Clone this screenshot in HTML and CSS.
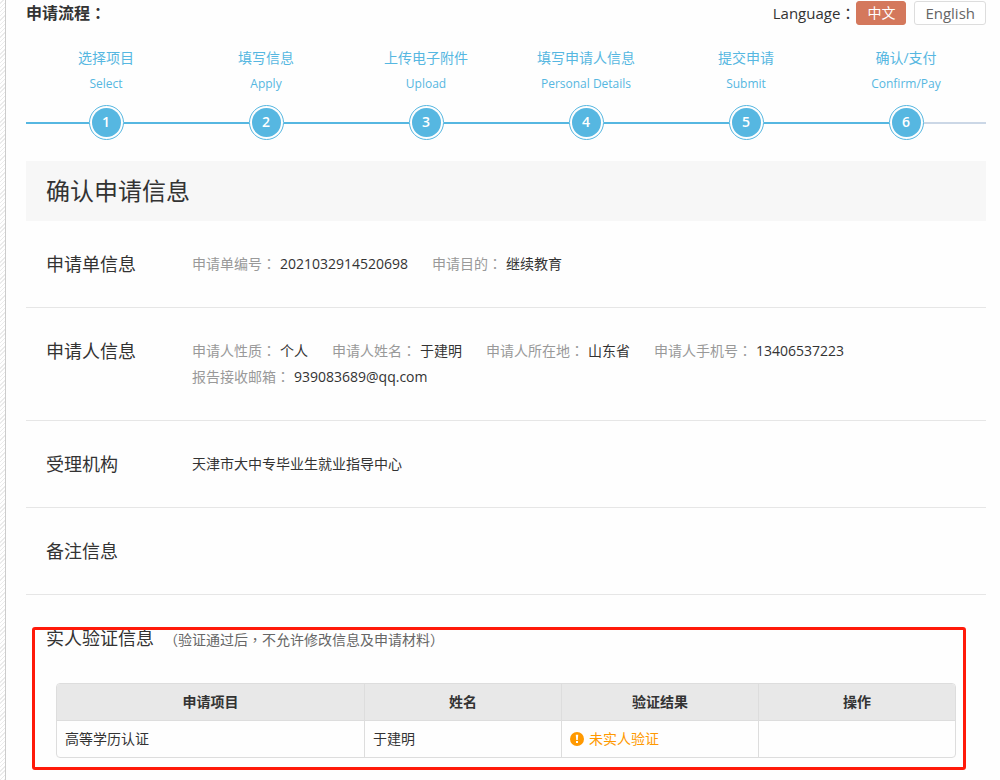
FILE: index.html
```
<!DOCTYPE html>
<html lang="zh-CN">
<head>
    <meta charset="utf-8">
    <title>确认申请信息</title>
    <link rel="stylesheet" href="styles.css">
</head>
<body>
<div class="main">
    <div class="top">
        <h2 class="top_title">申请流程<span class="mid" lang="zh-TW">：</span></h2>
        <div class="lang">
            <span class="lang_label">Language<span class="mid" lang="zh-TW">：</span></span>
            <button type="button" class="btn on">中文</button>
            <button type="button" class="btn en">English</button>
        </div>
    </div>

    <ol class="steps">
        <li><span class="cn">选择项目</span><span class="en">Select</span><div class="line"><i>1</i></div></li>
        <li><span class="cn">填写信息</span><span class="en">Apply</span><div class="line"><i>2</i></div></li>
        <li><span class="cn">上传电子附件</span><span class="en">Upload</span><div class="line"><i>3</i></div></li>
        <li><span class="cn">填写申请人信息</span><span class="en">Personal Details</span><div class="line"><i>4</i></div></li>
        <li><span class="cn">提交申请</span><span class="en">Submit</span><div class="line"><i>5</i></div></li>
        <li><span class="cn">确认/支付</span><span class="en">Confirm/Pay</span><div class="line"><i>6</i></div></li>
    </ol>

    <h1 class="title">确认申请信息</h1>

    <div class="row">
        <h3>申请单信息</h3>
        <dl class="info">
            <div><dt>申请单编号<span class="mid" lang="zh-TW">：</span></dt><dd>2021032914520698</dd></div>
            <div><dt>申请目的<span class="mid" lang="zh-TW">：</span></dt><dd>继续教育</dd></div>
        </dl>
    </div>
    <div class="row">
        <h3>申请人信息</h3>
        <dl class="info">
            <div><dt>申请人性质<span class="mid" lang="zh-TW">：</span></dt><dd>个人</dd></div>
            <div><dt>申请人姓名<span class="mid" lang="zh-TW">：</span></dt><dd>于建明</dd></div>
            <div><dt>申请人所在地<span class="mid" lang="zh-TW">：</span></dt><dd>山东省</dd></div>
            <div><dt>申请人手机号<span class="mid" lang="zh-TW">：</span></dt><dd>13406537223</dd></div>
            <div><dt>报告接收邮箱<span class="mid" lang="zh-TW">：</span></dt><dd>939083689@qq.com</dd></div>
        </dl>
    </div>
    <div class="row">
        <h3>受理机构</h3>
        <p class="info">天津市大中专毕业生就业指导中心</p>
    </div>
    <div class="row">
        <h3>备注信息</h3>
    </div>

    <div class="verify">
        <div class="verify_title">
            <h3>实人验证信息</h3>
            <p><span class="mid" lang="zh-TW">（</span>验证通过后<span class="mid" lang="zh-TW">，</span>不允许修改信息及申请材料<span class="mid" lang="zh-TW">）</span></p>
        </div>
        <table class="table">
            <thead>
            <tr>
                <th class="item">申请项目</th>
                <th>姓名</th>
                <th>验证结果</th>
                <th>操作</th>
            </tr>
            </thead>
            <tbody>
            <tr>
                <td>高等学历认证</td>
                <td>于建明</td>
                <td>
                    <div class="warn">
                        <svg width="14" height="14" viewBox="0 0 14 14">
                            <circle cx="7" cy="7" r="7" fill="#ff9900"/>
                            <path d="M5.8 2.8h2.4l-.4 5.2H6.2z" fill="#fff"/>
                            <rect x="6" y="9" width="2" height="2" fill="#fff"/>
                        </svg>
                        <span>未实人验证</span>
                    </div>
                </td>
                <td></td>
            </tr>
            </tbody>
        </table>
        <!-- 红框 -->
        <div class="mark"></div>
    </div>
</div>
</body>
</html>
```
FILE: styles.css
```
*{
    padding: 0;
    margin: 0;
    box-sizing: border-box;
}
body{
    padding-left: 5px;
    background: repeating-linear-gradient(135deg, #fff 0, #fff 2px, #ebebeb 2px, #ebebeb 3px);
    font-family: "Open Sans", "Noto Sans CJK SC", sans-serif;
    font-size: 14px;
    line-height: 26px;
    color: #333;
}
h1,h2,h3{
    font-weight: normal;
}
/* 标点居中 */
.mid{
    font-family: "Noto Sans CJK TC", sans-serif;
    line-height: 1;
}
.main{
    min-height: 100vh;
    padding: 0 14px 0 20px;
    border-left: 1px solid #ccc;
    background-color: #fefefe;
}
.top{
    display: flex;
    justify-content: space-between;
    align-items: center;
}
.top_title{
    font-size: 16px;
    font-weight: bold;
}
.lang{
    display: flex;
    align-items: center;
    gap: 8px;
}
.lang_label{
    margin-right: -7px;
    font-size: 15px;
}
.btn{
    height: 24px;
    padding: 0 10px;
    border: 1px solid #ddd;
    border-radius: 3px;
    background-color: #fff;
    font-family: inherit;
    font-size: 14px;
    line-height: 20px;
    color: #666;
    cursor: pointer;
}
.btn.en{
    font-size: 15px;
}
.btn.on{
    border-color: #d4785c;
    background-color: #d4785c;
    color: #fff;
}
.steps{
    display: flex;
    margin-top: 19px;
    list-style: none;
    text-align: center;
    color: #56b7e1;
}
.steps li{
    flex: 1;
}
.steps span{
    display: block;
}
.steps .en{
    font-size: 12px;
}
/* 进度线 */
.line{
    display: flex;
    justify-content: center;
    align-items: center;
    margin-top: 8px;
}
.line:before,
.line:after{
    content: "";
    flex: 1;
    height: 2px;
    background-color: #56b7e1;
}
.steps li:last-child .line:after{
    background-color: #cbd7e6;
}
.line i{
    width: 35px;
    height: 35px;
    padding: 2px;
    border: 1px solid #56b7e1;
    border-radius: 50%;
    background-color: #56b7e1;
    background-clip: content-box;
    font-style: normal;
    font-weight: 600;
    line-height: 28px;
    color: #fff;
}
.title{
    margin-top: 21px;
    padding: 0 20px;
    background-color: #f7f7f7;
    font-size: 24px;
    line-height: 60px;
}
.row{
    display: flex;
    padding: 30px 20px;
    border-bottom: 1px solid #e6e6e6;
}
.row h3{
    flex: none;
    width: 146px;
    font-size: 18px;
}
.info{
    display: flex;
    flex-wrap: wrap;
    flex: 1;
    column-gap: 24px;
}
.info div{
    display: flex;
    gap: 4px;
}
.info dt{
    color: #999;
}
.verify{
    position: relative;
    padding: 30px;
}
.verify_title{
    display: flex;
    align-items: baseline;
    gap: 10px;
    margin: 0 -10px 30px;
}
.verify_title h3{
    font-size: 18px;
}
.verify_title p{
    color: #666;
}
.table{
    width: 100%;
    table-layout: fixed;
    border: 1px solid #ddd;
    border-radius: 4px;
    border-spacing: 0;
    overflow: hidden;
}
.table th,
.table td{
    height: 37px;
    padding: 0 8px;
    border-left: 1px solid #ddd;
}
.table th:first-child,
.table td:first-child{
    border-left: none;
}
.table .item{
    width: 307px;
}
.table th{
    height: 36px;
    background-color: #e8e8e8;
}
.table td{
    border-top: 1px solid #ddd;
}
.warn{
    display: flex;
    align-items: center;
    gap: 5px;
    color: #ff9900;
}
.mark{
    position: absolute;
    top: 32px;
    right: 20px;
    left: 6px;
    height: 143px;
    border: 3px solid #ff1a0a;
    border-radius: 3px;
    pointer-events: none;
}
```
